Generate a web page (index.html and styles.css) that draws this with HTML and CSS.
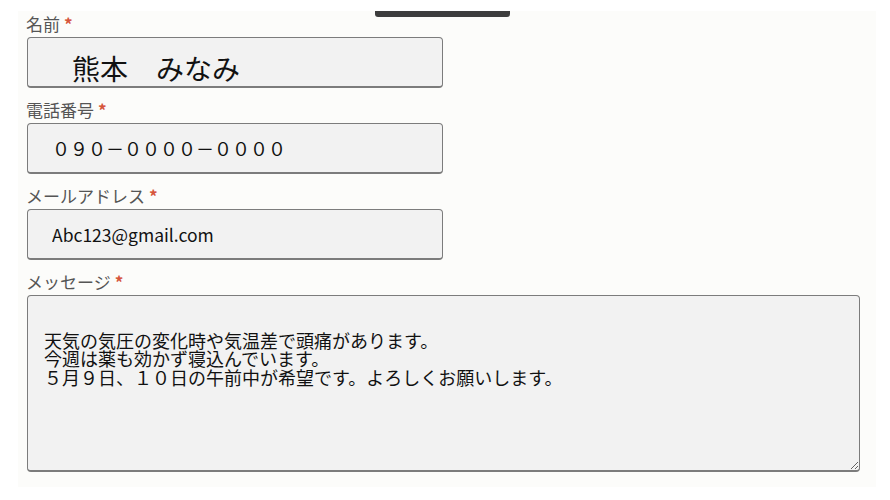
FILE: index.html
```html
<!DOCTYPE html>
<html lang="ja">
<head>
  <meta charset="UTF-8">
  <meta name="viewport" content="width=device-width, initial-scale=1.0">
  <title>お問い合わせ</title>
  <link rel="stylesheet" href="styles.css">
</head>
<body>
  <div class="sheet">
    <!-- Top handle -->
    <div class="handle"></div>

    <form class="contact-form">
      <div class="field">
        <label class="field-label" for="name">名前<span class="req">*</span></label>
        <input class="text-input name-input" type="text" id="name" value="熊本　みなみ">
      </div>

      <div class="field">
        <label class="field-label" for="tel">電話番号<span class="req">*</span></label>
        <input class="text-input" type="text" id="tel" value="０９０－００００－００００">
      </div>

      <div class="field">
        <label class="field-label" for="mail">メールアドレス<span class="req">*</span></label>
        <input class="text-input mail-input" type="text" id="mail" value="Abc123@gmail.com">
      </div>

      <div class="field">
        <label class="field-label" for="message">メッセージ<span class="req">*</span></label>
        <textarea class="text-area" id="message">

天気の気圧の変化時や気温差で頭痛があります。
今週は薬も効かず寝込んでいます。
５月９日、１０日の午前中が希望です。よろしくお願いします。</textarea>
      </div>
    </form>
  </div>
</body>
</html>
```

FILE: styles.css
```css
/* General styles */
body {
  margin: 0;
  background-color: #ffffff;
  font-family: "Noto Sans CJK JP", "Noto Sans", sans-serif;
  color: #111;
}

/* Form sheet */
.sheet {
  position: relative;
  margin: 11px 14px 13px 18px;
  height: 476px;
  background-color: #fcfcfa;
  padding-left: 9px;
}

/* Dark handle on top edge */
.handle {
  position: absolute;
  top: 0;
  left: 357px;
  width: 135px;
  height: 6px;
  background-color: #3d3d3d;
  border-radius: 0 0 3px 3px;
}

.contact-form {
  display: flex;
  flex-direction: column;
  gap: 9px;
}

.field {
  display: flex;
  flex-direction: column;
  gap: 2px;
}

/* Labels */
.field-label {
  display: block;
  height: 24px;
  margin-left: -1px;
  font-size: 17px;
  line-height: 25px;
  color: #555;
  overflow: hidden;
}

.req {
  color: #d6553b;
  margin-left: 4px;
  font-size: 17px;
  font-weight: bold;
  line-height: 1;
}

/* Inputs */
.text-input {
  box-sizing: border-box;
  width: 416px;
  height: 51px;
  padding: 0 24px;
  font-family: inherit;
  font-size: 18px;
  color: #111;
  background-color: #f2f2f2;
  border: 1px solid #7c7c7c;
  border-bottom-width: 2px;
  border-radius: 4px;
  outline: none;
}

.name-input {
  padding: 11px 0 0 44px;
  font-size: 28px;
}

.mail-input {
  font-size: 17.5px;
}

.text-area {
  box-sizing: border-box;
  width: 833px;
  height: 177px;
  padding: 16px;
  font-family: inherit;
  font-size: 18px;
  line-height: 18.6px;
  color: #111;
  background-color: #f2f2f2;
  border: 1px solid #7c7c7c;
  border-bottom-width: 2px;
  border-radius: 4px;
  outline: none;
}
```
